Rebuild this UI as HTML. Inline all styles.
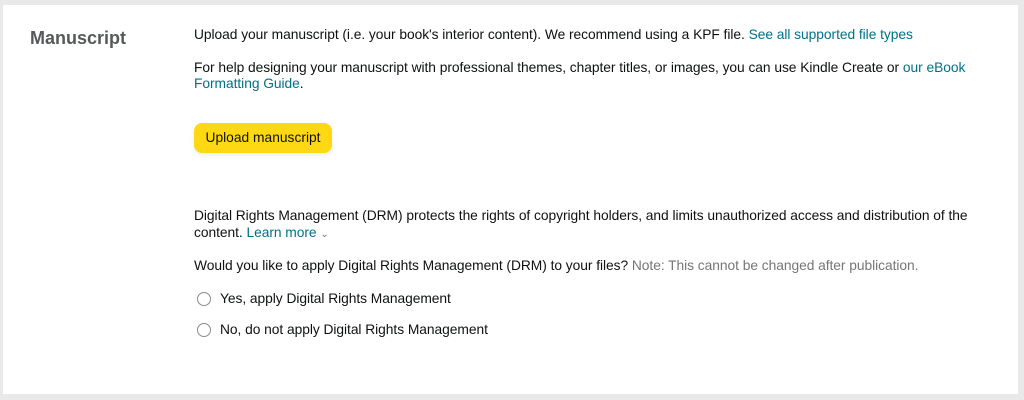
<!DOCTYPE html>
<html><head><style>
body{margin:0;background:#e9e9e9;width:1024px;height:400px;position:relative;font-family:"Liberation Sans",Arial,sans-serif;color:#0f1111;font-size:13.8px;}
.card{position:absolute;left:3px;top:5px;width:1015px;height:389px;background:#fff;}
.t{position:absolute;white-space:nowrap;line-height:16px;letter-spacing:-0.05px;}
a{color:#007185;text-decoration:none;}
h2{position:absolute;left:30px;top:28px;margin:0;font-size:18px;font-weight:bold;color:#565959;}
.btn{position:absolute;left:194px;top:123px;width:138px;height:30px;background:#ffd814;border-radius:8px;box-shadow:0 2px 5px rgba(213,217,217,.5);text-align:center;line-height:30px;}
.r{position:absolute;left:197px;width:12px;height:12px;border:1.5px solid #888c8c;border-radius:50%;}
.g{color:#767676}
</style></head><body>
<div class="card"></div>
<h2>Manuscript</h2>
<div class="t" style="left:194px;top:27px">Upload your manuscript (i.e. your book's interior content). We recommend using a KPF file. <a>See all supported file types</a></div>
<div class="t" style="left:194px;top:60px">For help designing your manuscript with professional themes, chapter titles, or images, you can use Kindle Create or <a>our eBook</a></div>
<div class="t" style="left:194px;top:76px"><a>Formatting Guide</a>.</div>
<div class="btn">Upload manuscript</div>
<div class="t" style="left:194px;top:208px">Digital Rights Management (DRM) protects the rights of copyright holders, and limits unauthorized access and distribution of the</div>
<div class="t" style="left:194px;top:225px">content. <a>Learn more</a> <span class="g" style="font-size:10px">&#8964;</span></div>
<div class="t" style="left:194px;top:258px">Would you like to apply Digital Rights Management (DRM) to your files? <span class="g">Note: This cannot be changed after publication.</span></div>
<div class="r" style="top:292px"></div>
<div class="t" style="left:220px;top:291px">Yes, apply Digital Rights Management</div>
<div class="r" style="top:323px"></div>
<div class="t" style="left:220px;top:322px">No, do not apply Digital Rights Management</div>
</body></html>
